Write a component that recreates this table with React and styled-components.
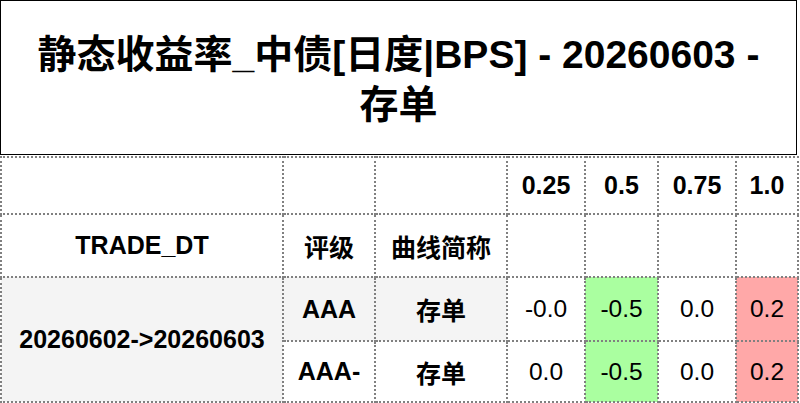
import styled, { createGlobalStyle } from "styled-components";

const GlobalStyle = createGlobalStyle`
  body {
    margin: 0;
    background: #fff;
    font-family: "Liberation Sans", "Noto Sans CJK SC", Arial, sans-serif;
  }
`;

const Page = styled.div`
  width: 797px;
`;

const TitleBox = styled.div`
  box-sizing: border-box;
  height: 155px;
  border: 1px solid #000;
  display: flex;
  align-items: center;
  justify-content: center;
  padding-top: 5px;
`;

const Title = styled.h1`
  margin: 0;
  font-size: 39px;
  line-height: 50px;
  font-weight: 700;
  text-align: center;
  color: #000;
`;

const Table = styled.table`
  width: 797px;
  table-layout: fixed;
  border-collapse: collapse;
  margin-top: 1px;
`;

const Row = styled.tr`
  height: ${(p) => p.h}px;
`;

const Cell = styled.td`
  border: 2px dotted #808080;
  padding: 0;
  text-align: center;
  vertical-align: middle;
  font-size: ${(p) => (p.bold ? 25 : 24.5)}px;
  font-weight: ${(p) => (p.bold ? 700 : 400)};
  color: #000;
  background: ${(p) => p.bg || "#fff"};
`;

const cols = [282, 92, 132, 78, 73, 78, 62];
const tenors = ["0.25", "0.5", "0.75", "1.0"];

const GRAY = "#f4f4f4";
const GREEN = "#aaffa0";
const RED = "#ffa8a8";
const valueBg = [null, GREEN, null, RED];

const rows = [
  { grade: "AAA", curve: "存单", values: ["-0.0", "-0.5", "0.0", "0.2"], bg: GRAY, h: 64 },
  { grade: "AAA-", curve: "存单", values: ["0.0", "-0.5", "0.0", "0.2"], bg: null, h: 61 },
];

export default function App() {
  return (
    <Page>
      <GlobalStyle />
      <TitleBox>
        <Title>
          静态收益率_中债[日度|BPS] - 20260603 -
          <br />
          存单
        </Title>
      </TitleBox>
      <Table>
        <colgroup>
          {cols.map((w, i) => (
            <col key={i} style={{ width: w }} />
          ))}
        </colgroup>
        <tbody>
          <Row h={57}>
            <Cell />
            <Cell />
            <Cell />
            {tenors.map((t) => (
              <Cell key={t} bold>
                {t}
              </Cell>
            ))}
          </Row>
          <Row h={63}>
            <Cell bold>TRADE_DT</Cell>
            <Cell bold>评级</Cell>
            <Cell bold>曲线简称</Cell>
            {tenors.map((t) => (
              <Cell key={t} />
            ))}
          </Row>
          {rows.map((r, i) => (
            <Row key={r.grade} h={r.h}>
              {i === 0 && (
                <Cell bold rowSpan={2} bg={GRAY}>
                  20260602-&gt;20260603
                </Cell>
              )}
              <Cell bold bg={r.bg}>
                {r.grade}
              </Cell>
              <Cell bold bg={r.bg}>
                {r.curve}
              </Cell>
              {r.values.map((v, j) => (
                <Cell key={j} bg={valueBg[j]}>
                  {v}
                </Cell>
              ))}
            </Row>
          ))}
        </tbody>
      </Table>
    </Page>
  );
}
